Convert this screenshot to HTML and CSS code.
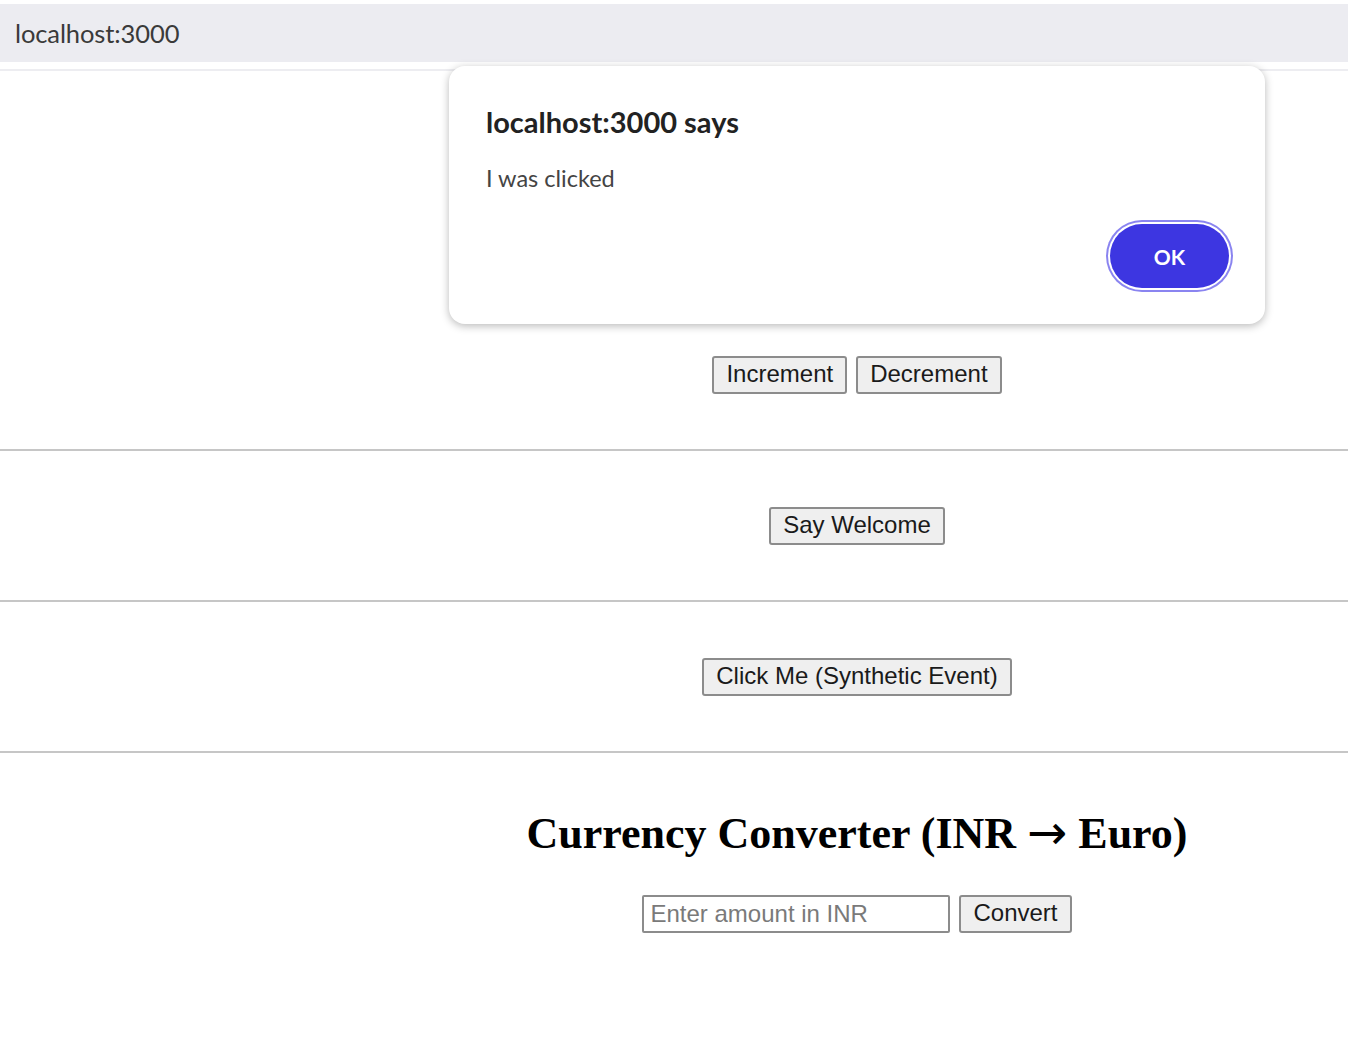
FILE: index.html
```html
<!DOCTYPE html>
<html lang="en">
<head>
<meta charset="utf-8">
<title>localhost:3000</title>
<link rel="stylesheet" href="styles.css">
</head>
<body>
<div class="chrome"><span class="url">localhost:3000</span></div>
<div class="chrome-line"></div>
<main class="app">
  <section class="sec sec-first">
    <div class="row">
      <button class="btn">Increment</button>
      <button class="btn">Decrement</button>
    </div>
  </section>
  <hr class="rule">
  <section class="sec">
    <div class="row">
      <button class="btn">Say Welcome</button>
    </div>
  </section>
  <hr class="rule">
  <section class="sec">
    <div class="row">
      <button class="btn">Click Me (Synthetic Event)</button>
    </div>
  </section>
  <hr class="rule">
  <section class="sec sec-last">
    <h2 class="title">Currency Converter (INR <span class="arrow">→</span> Euro)</h2>
    <div class="row">
      <input class="field" type="text" placeholder="Enter amount in INR">
      <button class="btn">Convert</button>
    </div>
  </section>
</main>
<div class="dialog" role="alertdialog">
  <div class="dlg-title">localhost:3000 says</div>
  <div class="dlg-msg">I was clicked</div>
  <button class="ok">OK</button>
</div>
</body>
</html>
```
FILE: styles.css
```css
html, body {
  margin: 0;
  padding: 0;
  background: #ffffff;
}
body {
  padding-top: 4px;
  font-family: "Liberation Sans", Arial, sans-serif;
}
.chrome {
  height: 58px;
  background: #ececf1;
  padding-left: 15px;
  display: flex;
  align-items: center;
}
.url {
  font-family: Lato, "Noto Sans", sans-serif;
  font-size: 25.5px;
  color: #3a3a3a;
  letter-spacing: -0.1px;
}
.chrome-line {
  height: 2px;
  margin-top: 7px;
  background: #ededf1;
}
.sec {
  padding: 56px 0 55px 366px;
  text-align: center;
}
.sec-first {
  padding-top: 285px;
}
.sec-last {
  padding-top: 56px;
  padding-bottom: 120px;
}
.row {
  display: flex;
  justify-content: center;
  gap: 9px;
}
.rule {
  margin: 0;
  border: 0;
  height: 2px;
  background: #c6c6c6;
}
.btn {
  font-family: "Liberation Sans", Arial, sans-serif;
  font-size: 24px;
  line-height: 28px;
  padding: 2px 12px 4px;
  border: 2px solid #8c8c8c;
  border-radius: 3px;
  background: #efefef;
  color: #1a1a1a;
  margin: 0;
}
.title {
  font-family: "Liberation Serif", "Times New Roman", serif;
  font-weight: bold;
  font-size: 44px;
  line-height: 50px;
  margin: 0 0 36px 0;
  color: #000;
}
.arrow {
  font-family: "DejaVu Sans", sans-serif;
  font-weight: normal;
  font-size: 48px;
  line-height: 0;
  position: relative;
  top: 1px;
}
.field {
  box-sizing: border-box;
  width: 308px;
  height: 38px;
  font-family: "Liberation Sans", Arial, sans-serif;
  font-size: 24px;
  padding: 2px 6px;
  border: 2px solid #8c8c8c;
  border-radius: 2px;
  margin: 0;
}
.field::placeholder {
  color: #7a7a7a;
}
.dialog {
  position: absolute;
  left: 449px;
  top: 66px;
  width: 816px;
  height: 258px;
  box-sizing: border-box;
  padding: 39px 36px 34px 37px;
  background: #fff;
  border-radius: 16px;
  box-shadow: 0 2px 8px rgba(0, 0, 0, 0.28);
  display: flex;
  flex-direction: column;
  font-family: Lato, "Noto Sans", sans-serif;
}
.dlg-title {
  font-size: 29px;
  line-height: 34px;
  font-weight: 700;
  color: #222;
}
.dlg-msg {
  margin-top: 25px;
  font-size: 23.5px;
  line-height: 28px;
  color: #444;
}
.ok {
  align-self: flex-end;
  margin-top: 32px;
  width: 119px;
  height: 64px;
  border: 0;
  border-radius: 32px;
  background: #3d36e1;
  color: #fff;
  font-family: Lato, "Noto Sans", sans-serif;
  font-weight: 700;
  font-size: 21px;
  box-shadow: 0 0 0 2px #ffffff, 0 0 0 4px #8a84f0;
}
```
